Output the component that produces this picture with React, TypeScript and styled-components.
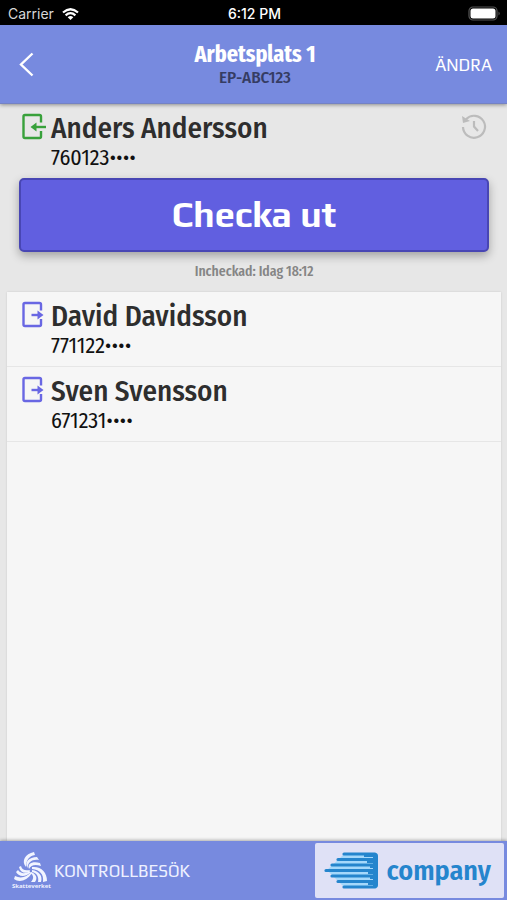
import React from 'react';
import styled, { createGlobalStyle } from 'styled-components';

const narrow = '"Fira Sans Condensed", "Liberation Sans Narrow", Roboto, sans-serif';
const extraNarrow = '"Fira Sans Extra Condensed", "Liberation Sans Narrow", Roboto, sans-serif';
const wide = 'Play, "Noto Sans", sans-serif';

const GlobalStyle = createGlobalStyle`
  * { box-sizing: border-box; }
  html, body, #root { height: 100%; }
  body { margin: 0; background: #e7e7e7; font-family: ${narrow}; color: #2e2e2e; }
  button { font: inherit; color: inherit; background: none; border: 0; padding: 0; cursor: pointer; }
  svg { display: block; flex: none; }
  h1, h2, p, ul { margin: 0; padding: 0; }
`;

const Screen = styled.div`
  min-height: 100%;
  display: flex;
  flex-direction: column;
`;

const StatusBar = styled.div`
  display: grid;
  grid-template-columns: 1fr auto 1fr;
  align-items: center;
  height: 25px;
  padding: 2px 6px 0 8px;
  background: #000;
  color: #fff;
  font: 500 14px/20px Inter, sans-serif;
`;

const Carrier = styled.div`
  display: flex;
  align-items: center;
  gap: 8px;
  font-weight: 400;
  color: #d8d8d8;
`;

const Battery = styled.div`
  justify-self: end;
`;

const Header = styled.header`
  position: relative;
  display: grid;
  grid-template-columns: 1fr auto 1fr;
  align-items: center;
  height: 79px;
  padding: 0 15px 0 18px;
  background: #778adf;
  color: #fff;
  border-bottom: 1px solid #7482c4;
  box-shadow: 0 1px 4px rgba(0, 0, 0, 0.4);
`;

const BackButton = styled.button`
  justify-self: start;
`;

const Titles = styled.div`
  text-align: center;
`;

const Title = styled.h1`
  font-family: ${extraNarrow};
  font-size: 24px;
  line-height: 28px;
  font-weight: 700;
`;

const Subtitle = styled.p`
  font-size: 17px;
  line-height: 20px;
  font-weight: 500;
  color: #353c63;
`;

const EditButton = styled.button`
  && {
    justify-self: end;
    padding-top: 2px;
    font: 400 17px/24px ${wide};
  }
`;

const Content = styled.main`
  flex: 1;
  display: flex;
  flex-direction: column;
`;

const ActivePanel = styled.section`
  padding: 8px 18px 11px 19px;
`;

const Person = styled.div`
  display: flex;
  align-items: flex-start;
  gap: 4px;
`;

const PersonText = styled.div`
  flex: 1;
`;

const Name = styled.h2`
  font-size: 29px;
  line-height: 33px;
  font-weight: 500;
`;

const IdNumber = styled.p`
  font-size: 22px;
  line-height: 26px;
  color: #111;
`;

const CheckOutButton = styled.button`
  && {
    display: block;
    width: 100%;
    height: 74px;
    margin: 7px 0 9px;
    padding-bottom: 2px;
    border: 2px solid #4846b4;
    border-radius: 5px;
    background: #615fe0;
    box-shadow: 0 4px 10px rgba(0, 0, 0, 0.3);
    color: #fff;
    font: 700 36px/68px ${wide};
  }
`;

const CheckedIn = styled.p`
  text-align: center;
  font-family: ${extraNarrow};
  font-size: 15px;
  line-height: 20px;
  font-weight: 500;
  color: #858585;
`;

const PeopleList = styled.ul`
  flex: 1;
  margin: 0 6px 0 7px;
  list-style: none;
  background: #f6f6f6;
  box-shadow: 0 0 2px rgba(0, 0, 0, 0.12);
`;

const PersonRow = styled.li`
  padding: 8px 12px 7px;
  border-bottom: 1px solid #e6e6e6;
`;

const Footer = styled.footer`
  display: flex;
  justify-content: space-between;
  align-items: stretch;
  height: 59px;
  padding: 2px 3px 2px 12px;
  background: #778adf;
  box-shadow: 0 -1px 3px rgba(0, 0, 0, 0.3);
`;

const InspectionButton = styled.button`
  && {
    display: flex;
    align-items: center;
    gap: 3px;
    color: #eef1ff;
    font: 400 17px/24px ${wide};
  }
`;

const Agency = styled.span`
  display: flex;
  flex-direction: column;
  align-items: center;
  font: 700 6px/7px "Noto Sans", sans-serif;
`;

const Sponsor = styled.a`
  display: flex;
  align-items: center;
  gap: 8px;
  padding: 0 13px 0 9px;
  border-radius: 2px;
  background: #dfe1f6;
  color: #2585cd;
  text-decoration: none;
  font: 600 28px/36px ${narrow};
`;

function DoorIcon({ inward = false }: { inward?: boolean }) {
  return (
    <svg width="28" height="30" viewBox="0 0 28 30" fill="none" stroke={inward ? '#38a13b' : '#6967e3'} strokeWidth="2.400">
      <path d="M22 10.500V4.500Q22 3 20.500 3H6Q4.500 3 4.500 4.500V24.500Q4.500 26 6 26H20.500Q22 26 22 24.500V19" />
      {inward ? (
        <>
          <path d="M27 15H15" />
          <path d="M17.500 10.500 11.500 15 17.500 19.500Z" fill="#38a13b" stroke="none" />
        </>
      ) : (
        <>
          <path d="M12.500 15H20" />
          <path d="M18.500 10.500 24.500 15 18.500 19.500Z" fill="#6967e3" stroke="none" />
        </>
      )}
    </svg>
  );
}

function PersonEntry({ name, id, inward, children }: { name: string; id: string; inward?: boolean; children?: React.ReactNode }) {
  return (
    <Person>
      <DoorIcon inward={inward} />
      <PersonText>
        <Name>{name}</Name>
        <IdNumber>{id}••••</IdNumber>
      </PersonText>
      {children}
    </Person>
  );
}

const people = [
  { name: 'David Davidsson', id: '771122' },
  { name: 'Sven Svensson', id: '671231' },
];

const swirlArms = [
  'M14 15C9 9 13 2 22 0L23 3C17 4 14 8 14 15Z',
  'M15.500 16C12 10 17 5 25 5L27 8C20 7 16 10 15.500 16Z',
  'M17 17C15 12 20 9 28 11L29 14C23 12 19 13 17 17Z',
  'M17 20C12 22 8 20 7 15L9 14C10 18 13 19 18 18Z',
  'M18 21C12 26 6 24 4 20L6 18C9 22 13 22 18 19Z',
  'M20 21C15 29 7 31 2 27L3 24C9 27 15 25 19 20Z',
  'M20 15C29 14 35 20 35 29L31 30C32 22 28 18 20 17Z',
  'M20 18C27 19 31 24 29 30L26 30C27 25 25 21 20 20Z',
  'M19 20C24 22 26 26 23 30L19 30C22 27 22 23 18 21Z',
];

export default function App() {
  return (
    <>
      <GlobalStyle />
      <Screen>
        <StatusBar>
          <Carrier>
            <span>Carrier</span>
            <svg width="17" height="12" viewBox="0 0 17 12" fill="none" stroke="#fff" strokeWidth="2.200">
              <path d="M1 4.500Q8.500 -2 16 4.500M3.600 7.300Q8.500 3 13.400 7.300" />
              <path d="M5.700 9.200Q8.500 6.800 11.300 9.200L8.500 12Z" fill="#fff" stroke="none" />
            </svg>
          </Carrier>
          <span>6:12 PM</span>
          <Battery>
            <svg width="33" height="15" viewBox="0 0 33 15">
              <rect x="1" y="1" width="28" height="13" rx="4" fill="none" stroke="#555" strokeWidth="1.200" />
              <rect x="2.500" y="2.500" width="25" height="10" rx="2.500" fill="#fff" />
              <path d="M30.500 5.500Q33 7.500 30.500 9.500Z" fill="#555" />
            </svg>
          </Battery>
        </StatusBar>
        <Header>
          <BackButton aria-label="Tillbaka">
            <svg width="18" height="26" viewBox="0 0 18 26" fill="none" stroke="#fff" strokeWidth="2.400">
              <path d="M14.500 2.500 3 13.500 14.500 24.500" />
            </svg>
          </BackButton>
          <Titles>
            <Title>Arbetsplats 1</Title>
            <Subtitle>EP-ABC123</Subtitle>
          </Titles>
          <EditButton>ÄNDRA</EditButton>
        </Header>
        <Content>
          <ActivePanel>
            <PersonEntry name="Anders Andersson" id="760123" inward>
              <button aria-label="Historik">
                <svg width="28" height="30" viewBox="0 0 28 30" fill="none" stroke="#bcbcbc" strokeWidth="2.200">
                  <path d="M2 15A11 11 0 1 0 5 7.200" />
                  <path d="M1 4 2 11 9 9Z" fill="#bcbcbc" stroke="none" />
                  <path d="M13 9V14.500L17 19" />
                </svg>
              </button>
            </PersonEntry>
            <CheckOutButton>Checka ut</CheckOutButton>
            <CheckedIn>Incheckad: Idag 18:12</CheckedIn>
          </ActivePanel>
          <PeopleList>
            {people.map((p) => (
              <PersonRow key={p.id}>
                <PersonEntry name={p.name} id={p.id} />
              </PersonRow>
            ))}
          </PeopleList>
        </Content>
        <Footer>
          <InspectionButton>
            <Agency>
              <svg width="38" height="31" viewBox="0 0 38 31" fill="#f2f5ff">
                {swirlArms.map((d) => (
                  <path key={d} d={d} />
                ))}
              </svg>
              <span>Skatteverket</span>
            </Agency>
            <span>KONTROLLBESÖK</span>
          </InspectionButton>
          <Sponsor href="#company">
            <svg width="55" height="37" viewBox="0 0 55 37">
              <path d="M21 1H51Q54 1 54 4V33Q54 36 51 36H21L9 24 3 18 14 8Z" fill="#a5d8fb" />
              <g stroke="#2585cd" strokeWidth="3.200" strokeLinecap="round">
                <path d="M20 2H51M14 7.500H52M8 13H52M2 18.500H52M8 24H52M14 29.500H52M20 35H51" />
              </g>
              <path d="M40 1H51Q54 1 54 4V33Q54 36 51 36H49V33H44V31H49V27H46V25H49V22H44V20H49V16H46V14H49V11H43V9H49V5H40Z" fill="#2585cd" />
            </svg>
            <span>company</span>
          </Sponsor>
        </Footer>
      </Screen>
    </>
  );
}
